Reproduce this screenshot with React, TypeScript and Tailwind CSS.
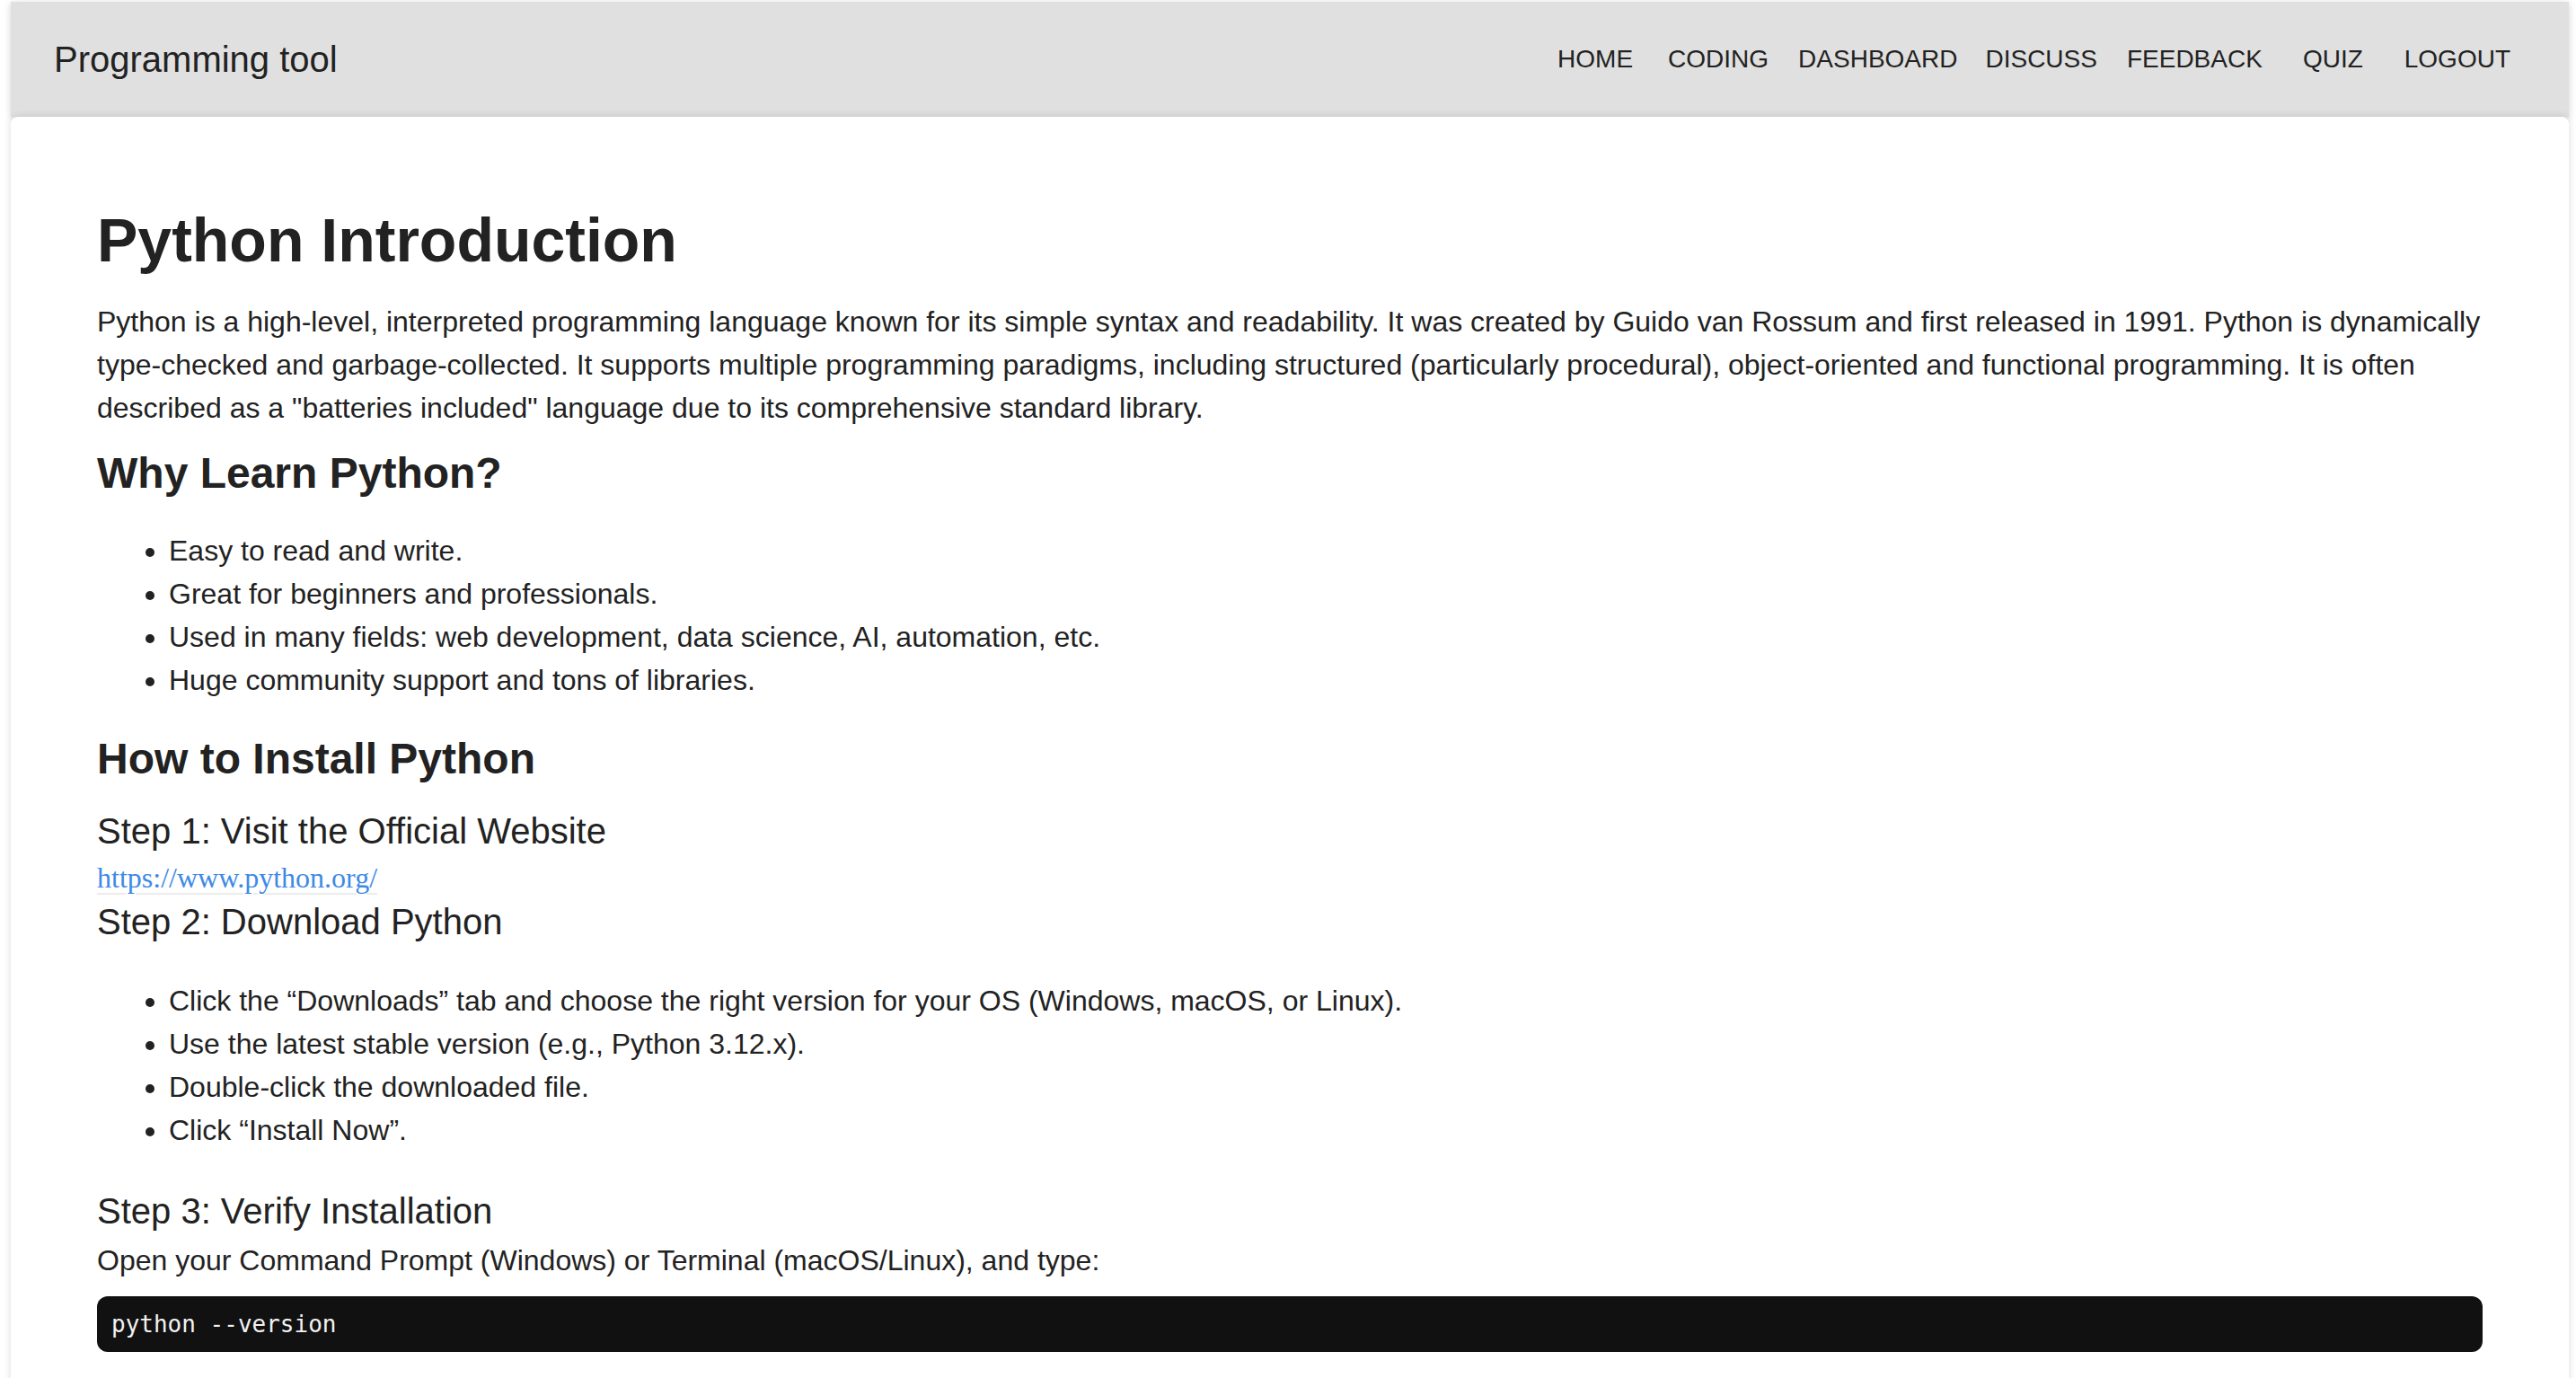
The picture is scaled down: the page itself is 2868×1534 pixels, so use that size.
import React from 'react';

const navItems = [
  { label: 'HOME', cls: '' },
  { label: 'CODING', cls: 'ml-[39px]' },
  { label: 'DASHBOARD', cls: 'ml-[33px]' },
  { label: 'DISCUSS', cls: 'ml-[31px]' },
  { label: 'FEEDBACK', cls: 'ml-[33px]' },
  { label: 'QUIZ', cls: 'ml-[45px]' },
  { label: 'LOGOUT', cls: 'ml-[46px]' },
];

const whyItems = [
  'Easy to read and write.',
  'Great for beginners and professionals.',
  'Used in many fields: web development, data science, AI, automation, etc.',
  'Huge community support and tons of libraries.',
];

const downloadItems = [
  'Click the \u201cDownloads\u201d tab and choose the right version for your OS (Windows, macOS, or Linux).',
  'Use the latest stable version (e.g., Python 3.12.x).',
  'Double-click the downloaded file.',
  'Click \u201cInstall Now\u201d.',
];

function BulletList({ items, className }: { items: string[]; className?: string }) {
  return (
    <ul className={`list-disc pl-[80px] ${className ?? ''}`}>
      {items.map((item) => (
        <li key={item} className="text-[32px] leading-[48px]">
          {item}
        </li>
      ))}
    </ul>
  );
}

export default function App() {
  return (
    <div className="min-h-screen bg-white font-['Liberation_Sans',Arial,sans-serif] text-[#222]">
      <div className="ml-[12px] mr-[8px] pt-[2px]">
        <header className="flex h-[128px] items-center bg-[#e0e0e0] pl-[48px] pr-[65px] shadow-[0_2px_8px_rgba(0,0,0,0.18)]">
          <div className="text-[40px] leading-none">Programming tool</div>
          <nav className="ml-auto flex items-center">
            {navItems.map((item) => (
              <a key={item.label} className={`text-[28px] leading-none ${item.cls}`}>
                {item.label}
              </a>
            ))}
          </nav>
        </header>

        <main className="rounded-t-[8px] bg-white px-[96px] pt-[98px] pb-[60px] shadow-[0_0_8px_rgba(0,0,0,0.14)]">
          <h1 className="text-[68px] font-bold leading-[78px]">Python Introduction</h1>
          <p className="mt-[28px] text-[32px] leading-[48px]">
            Python is a high-level, interpreted programming language known for its simple syntax and readability. It was
            created by Guido van Rossum and first released in 1991. Python is dynamically type-checked and
            garbage-collected. It supports multiple programming paradigms, including structured (particularly procedural),
            object-oriented and functional programming. It is often described as a "batteries included" language due to
            its comprehensive standard library.
          </p>

          <h2 className="mt-[21px] text-[48px] font-bold leading-[56px]">Why Learn Python?</h2>
          <BulletList items={whyItems} className="mt-[34px]" />

          <h2 className="mt-[36px] text-[48px] font-bold leading-[56px]">How to Install Python</h2>

          <h3 className="mt-[28px] text-[40px] font-normal leading-[48px]">Step 1: Visit the Official Website</h3>
          <a
            href="#"
            className="mt-[4px] block w-fit font-['Liberation_Serif','Times_New_Roman',serif] text-[32px] leading-[48px] text-[#3d8ae6] underline decoration-[#ececec] decoration-2 underline-offset-[6px]"
          >
            https://www.python.org/
          </a>

          <h3 className="mt-[1px] text-[40px] font-normal leading-[48px]">Step 2: Download Python</h3>
          <BulletList items={downloadItems} className="mt-[40px]" />

          <h3 className="mt-[42px] text-[40px] font-normal leading-[48px]">Step 3: Verify Installation</h3>
          <p className="mt-[7px] text-[32px] leading-[48px]">
            Open your Command Prompt (Windows) or Terminal (macOS/Linux), and type:
          </p>
          <pre className="mt-[16px] flex h-[62px] items-center rounded-[12px] bg-[#111] px-[16px] font-['DejaVu_Sans_Mono',Menlo,monospace] text-[26px] text-[#f2f2f2]">
            python --version
          </pre>
        </main>
      </div>
    </div>
  );
}
